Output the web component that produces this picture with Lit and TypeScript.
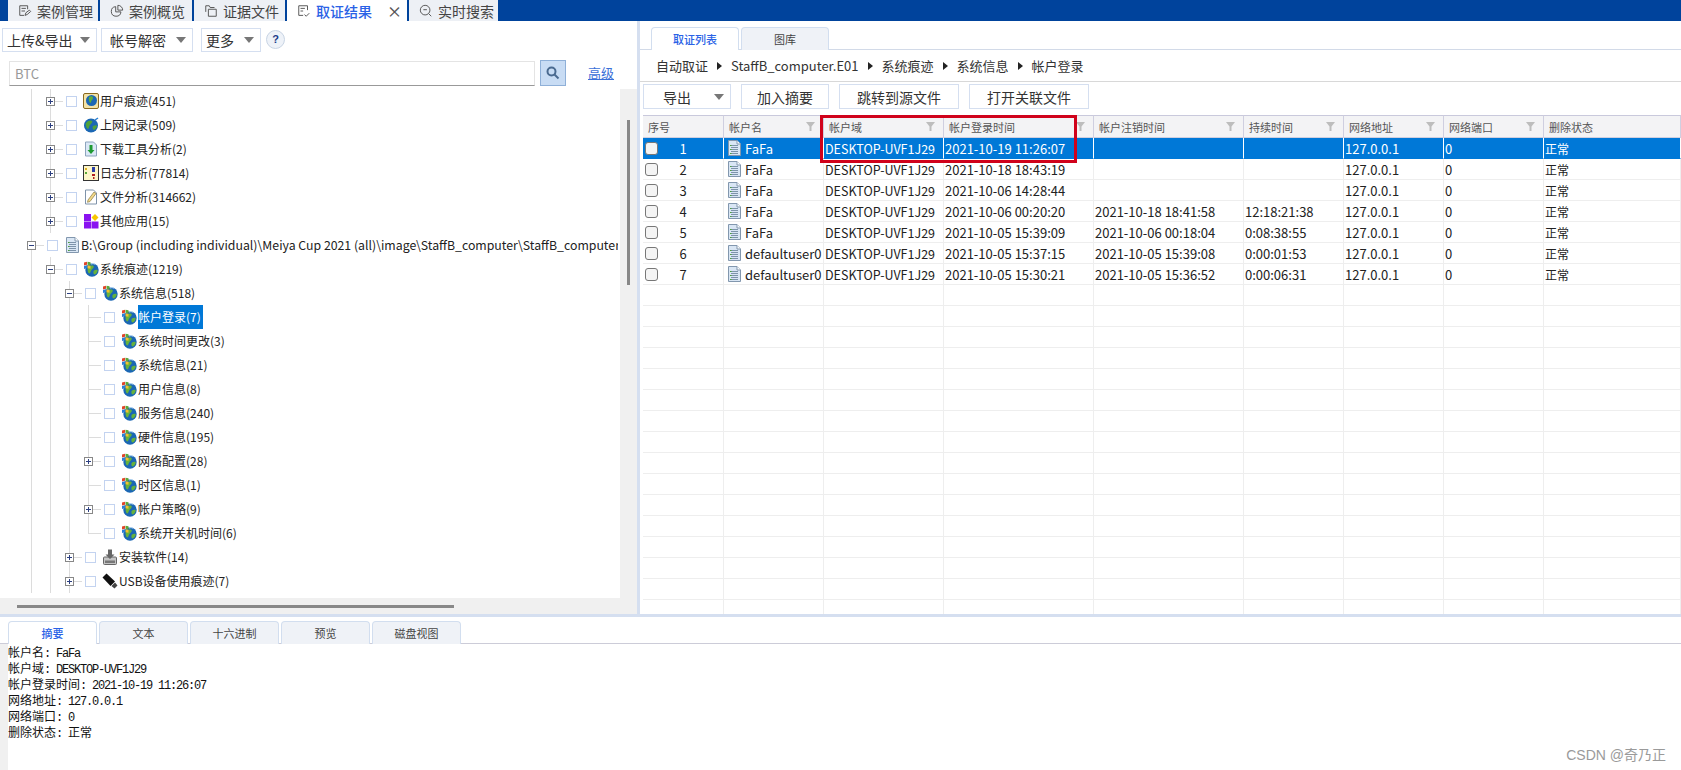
import { LitElement, html, css, svg } from 'lit';
import { customElement } from 'lit/decorators.js';

const globe = svg`<circle cx="9" cy="9" r="6.700" fill="#1b67b4"/><path d="M5 6.500c2-2 4.500-2.500 5.500-1.500s-1 3-2 4-1 3.500-2.200 3.500S4 8.500 5 6.500zM11 9.500c1.500-1 3.700-1 3.700 0s-1.700 4-3 4-1.800-3-.7-4z" fill="#66b23c"/><path d="M8 3c1.500-.5 3-.4 4 .3" stroke="#bfe0fa" fill="none"/>`;

const icons: Record<string, unknown> = {
  sys: html`<svg width="16" height="16" viewBox="0 0 16 16">${globe}<path d="M1 1.500l3-.8v3l-3 .8z" fill="#e0452a"/><path d="M4.500 .7l3 .5v3l-3-.5z" fill="#5aa838"/><path d="M1 5l3-.8v3L1 8z" fill="#2c7fd6"/><path d="M4.500 4.300l3 .5v3l-3-.5z" fill="#f2c12e"/></svg>`,
  user: html`<svg width="16" height="16" viewBox="0 0 16 16"><rect x=".5" y=".5" width="15" height="15" rx="1.500" fill="#f3e3a8" stroke="#8a6a20"/><circle cx="8.500" cy="7.500" r="5.500" fill="#1b67b4"/><path d="M6 4c2-1 4-1 4 1s-2 2-2 4-3 0-2-5z" fill="#5fae3a"/></svg>`,
  web: html`<svg width="16" height="16" viewBox="0 0 16 16"><circle cx="8" cy="8.500" r="7" fill="#1b67b4"/><path d="M3 6c2-3 5-3 6-2s-1 3-2 4-1 4-2 4-3-4-2-6zM10 9c2-1 4-1 4 0s-2 4-3 4-2-3-1-4z" fill="#4fa23a"/><path d="M12 3l3-2" stroke="#2a7fd0" stroke-width="1.500"/></svg>`,
  down: html`<svg width="16" height="16" viewBox="0 0 16 16"><path d="M2.500 1h8l3 3v11h-11z" fill="#dbe8f6" stroke="#8da4bd"/><path d="M6.500 4h3v5h2l-3.500 4-3.500-4h2z" fill="#1f9a32"/></svg>`,
  log: html`<svg width="16" height="16" viewBox="0 0 16 16"><rect x=".5" y=".5" width="15" height="15" fill="#fdf6c8" stroke="#333"/><rect x="2" y="3" width="2" height="2" fill="#e0b020"/><rect x="2" y="7" width="2" height="2" fill="#5aa838"/><rect x="9" y="2" width="3" height="5" fill="#2a3fa8"/><rect x="9" y="9" width="3" height="2" fill="#b02020"/><rect x="10" y="12" width="1.500" height="2" fill="#b02020"/></svg>`,
  file: html`<svg width="16" height="16" viewBox="0 0 16 16"><path d="M2.500 1h8l3 3v11h-11z" fill="#fff" stroke="#7f93aa"/><path d="M5 11l6-8 2 1.500-6 8-2.500 .8z" fill="#f3d98a" stroke="#8a7a40" stroke-width=".7"/></svg>`,
  apps: html`<svg width="16" height="16" viewBox="0 0 16 16"><rect x="1" y="1" width="7" height="7" fill="#8a12f0"/><rect x="1" y="8.500" width="7" height="7" fill="#8a12f0"/><rect x="8.500" y="8.500" width="7" height="7" fill="#8a12f0"/><path d="M12 1l3.500 3.500-3.500 3.500-3.500-3.500z" fill="#f7c600"/></svg>`,
  doc: html`<svg width="13" height="16" viewBox="0 0 13 16"><path d="M.5.500h8.500l3.500 3.500v11.500h-12z" fill="#d9e6f4" stroke="#8297ae"/><path d="M9 .5v3.500h3.500" fill="#fff" stroke="#8297ae"/><path d="M3 5.500h7M3 7.500h7M3 9.500h7M3 11.500h7M3 13.500h7" stroke="#7d93aa"/><path d="M2 5.500h1.500M2 9.500h1.500M2 13.500h1.500" stroke="#4fa23a"/></svg>`,
  setup: html`<svg width="14" height="16" viewBox="0 0 14 16"><rect x=".5" y="8" width="13" height="7.500" rx="1" fill="#c4c4c4" stroke="#666"/><rect x="2" y="11.500" width="10" height="2.500" fill="#777"/><path d="M5 .5h4v5h2.500L7 10 2.500 5.500H5z" fill="#666"/></svg>`,
  usb: html`<svg width="16" height="16" viewBox="0 0 16 16"><path d="M.5 4.500l4-4 8.500 8-4.500 4.500z" fill="#111"/><path d="M9.500 13l3.500-3.500 2.500 3-3 3z" fill="#444"/></svg>`,
};

const tabIcons: Record<string, unknown> = {
  edit: svg`<path d="M11 6V2H2v11h5M4 5h5M4 8h4M8 13l1-3 4-3 1.500 1.500-4 3.500z"/>`,
  pie: svg`<path d="M6.500 3a5.500 5.500 0 1 0 6 6h-6zM9 1.500V7h5.500A5.500 5.500 0 0 0 9 1.500z"/>`,
  folder: svg`<path d="M2 9V2h4l1 2h5M5 6v8h9V6z"/>`,
  check: svg`<path d="M12 7V2H2v11h5M4 5h5M4 8h3M8.500 12l2 2 3.500-3.500"/>`,
  search: svg`<circle cx="7" cy="7" r="5.500"/><path d="M11 11l3 3M5 6.500h4"/>`,
};

const tabs = [
  { t: '案例管理', i: 'edit', w: 90 },
  { t: '案例概览', i: 'pie', w: 92 },
  { t: '证据文件', i: 'folder', w: 91 },
  { t: '取证结果', i: 'check', w: 120, on: true },
  { t: '实时搜索', i: 'search', w: 89 },
];

// l: indent depth, tog: plus / minus / leaf, last: end of the sibling list
const tree = [
  { l: 1, tog: 'plus', i: 'user', t: '用户痕迹(451)' },
  { l: 1, tog: 'plus', i: 'web', t: '上网记录(509)' },
  { l: 1, tog: 'plus', i: 'down', t: '下载工具分析(2)' },
  { l: 1, tog: 'plus', i: 'log', t: '日志分析(77814)' },
  { l: 1, tog: 'plus', i: 'file', t: '文件分析(314662)' },
  { l: 1, tog: 'plus', i: 'apps', t: '其他应用(15)' },
  { l: 0, tog: 'minus', i: 'doc', t: 'B:\\Group (including individual)\\Meiya Cup 2021 (all)\\image\\StaffB_computer\\StaffB_computer', wide: true },
  { l: 1, tog: 'minus', i: 'sys', t: '系统痕迹(1219)' },
  { l: 2, tog: 'minus', i: 'sys', t: '系统信息(518)' },
  { l: 3, tog: 'leaf', i: 'sys', t: '帐户登录(7)', sel: true },
  { l: 3, tog: 'leaf', i: 'sys', t: '系统时间更改(3)' },
  { l: 3, tog: 'leaf', i: 'sys', t: '系统信息(21)' },
  { l: 3, tog: 'leaf', i: 'sys', t: '用户信息(8)' },
  { l: 3, tog: 'leaf', i: 'sys', t: '服务信息(240)' },
  { l: 3, tog: 'leaf', i: 'sys', t: '硬件信息(195)' },
  { l: 3, tog: 'plus', i: 'sys', t: '网络配置(28)' },
  { l: 3, tog: 'leaf', i: 'sys', t: '时区信息(1)' },
  { l: 3, tog: 'plus', i: 'sys', t: '帐户策略(9)' },
  { l: 3, tog: 'leaf', i: 'sys', t: '系统开关机时间(6)', last: true },
  { l: 2, tog: 'plus', i: 'setup', t: '安装软件(14)' },
  { l: 2, tog: 'plus', i: 'usb', t: 'USB设备使用痕迹(7)' },
];

const cols = ['序号', '帐户名', '帐户域', '帐户登录时间', '帐户注销时间', '持续时间', '网络地址', '网络端口', '删除状态'];

const rows = [
  ['FaFa', '2021-10-19 11:26:07', '', ''],
  ['FaFa', '2021-10-18 18:43:19', '', ''],
  ['FaFa', '2021-10-06 14:28:44', '', ''],
  ['FaFa', '2021-10-06 00:20:20', '2021-10-18 18:41:58', '12:18:21:38'],
  ['FaFa', '2021-10-05 15:39:09', '2021-10-06 00:18:04', '0:08:38:55'],
  ['defaultuser0', '2021-10-05 15:37:15', '2021-10-05 15:39:08', '0:00:01:53'],
  ['defaultuser0', '2021-10-05 15:30:21', '2021-10-05 15:36:52', '0:00:06:31'],
];

const summary = [
  ['帐户名', 'FaFa'],
  ['帐户域', 'DESKTOP-UVF1J29'],
  ['帐户登录时间', '2021-10-19 11:26:07'],
  ['网络地址', '127.0.0.1'],
  ['网络端口', '0'],
  ['删除状态', '正常'],
];

@customElement('app-root')
export class AppRoot extends LitElement {

  static styles = css`
    :host {
      display: flex;
      flex-direction: column;
      width: 1681px;
      height: 770px;
      overflow: hidden;
      background: #fff;
      position: relative;
      font-family: "Noto Sans CJK SC", sans-serif;
      font-size: 13px;
      color: #222;
    }
    .topbar {
      height: 21px;
      flex: none;
      background: #00439c;
      display: flex;
      gap: 2px;
      padding-left: 8px;
      overflow: hidden;
    }
    .toptab {
      display: flex;
      align-items: center;
      flex: none;
      box-sizing: border-box;
      padding-left: 10px;
      gap: 5px;
      background: #edf0f5;
      color: #444;
      font-size: 14px;
      line-height: 20px;
    }
    .toptab.on { background: #fff; color: #2a62e6; font-weight: 500; }
    .toptab svg { flex: none; fill: none; stroke: #555; stroke-width: 1.1; }
    .toptab .x { margin-left: 10px; color: #555; font-size: 15px; }
    .main { height: 593px; flex: none; display: flex; }
    .left { width: 637px; flex: none; display: flex; flex-direction: column; }
    .vsplit { width: 3px; flex: none; background: #d5dff0; }
    .right { flex: 1; min-width: 0; display: flex; flex-direction: column; overflow: hidden; }
    .hsplit { height: 3px; flex: none; background: #d5dff0; }

    .ltools { height: 40px; flex: none; padding: 7px 0 0 2px; box-sizing: border-box; display: flex; align-items: flex-start; }
    .ddl {
      height: 24px;
      box-sizing: border-box;
      border: 1px solid #d5dff0;
      display: flex;
      align-items: center;
      justify-content: space-between;
      padding: 0 6px 0 4px;
      font-size: 14px;
      color: #333;
    }
    .caret { width: 0; height: 0; border: 5px solid transparent; border-top: 6px solid #777; border-bottom: 0; }
    .help {
      width: 19px;
      height: 19px;
      box-sizing: border-box;
      border: 1px solid #c8d4e4;
      border-radius: 50%;
      background: #eef2f8;
      color: #1a3a8a;
      font: bold 11px/17px "Liberation Sans", sans-serif;
      text-align: center;
      margin: 2px 0 0 5px;
    }
    .search { height: 28px; flex: none; display: flex; padding-left: 9px; align-items: flex-start; }
    .input {
      width: 526px;
      height: 25px;
      box-sizing: border-box;
      border: 1px solid #e4e4e4;
      border-bottom: 1px solid #999;
      color: #999;
      padding-left: 5px;
      line-height: 23px;
      font-size: 13px;
    }
    .sbtn {
      width: 26px;
      height: 26px;
      margin: -1px 0 0 5px;
      box-sizing: border-box;
      border: 1px solid #8fb0d8;
      background: #c8dcf4;
      display: flex;
      align-items: center;
      justify-content: center;
    }
    .adv { margin: 3px 0 0 22px; color: #3b70d8; text-decoration: underline; font-size: 13px; line-height: 18px; }

    .treewrap { flex: 1; min-height: 0; display: flex; }
    .treecol { width: 620px; flex: none; display: flex; flex-direction: column; }
    .tree { flex: 1; min-height: 0; overflow: hidden; }
    .hbar { height: 16px; flex: none; background: #f0f0f0; padding: 7px 0 0 17px; box-sizing: border-box; }
    .hthumb { width: 437px; height: 3px; background: #888; }
    .vbar { width: 17px; flex: none; background: #f0f0f0; padding: 31px 0 0 7px; box-sizing: border-box; }
    .vthumb { width: 3px; height: 165px; background: #888; }

    .row { height: 24px; display: flex; align-items: stretch; padding-left: 22px; white-space: nowrap; }
    .guide, .tog { width: 19px; flex: none; position: relative; }
    .guide::before, .tog::before {
      content: "";
      position: absolute;
      left: 9px;
      top: 0;
      bottom: 0;
      width: 1px;
      background: #dcdcdc;
    }
    .tog.last::before { bottom: 12px; }
    .tog::after {
      content: "";
      position: absolute;
      left: 9px;
      right: -3px;
      top: 12px;
      height: 1px;
      background: #dcdcdc;
    }
    .box {
      position: absolute;
      left: 5px;
      top: 8px;
      width: 9px;
      height: 9px;
      box-sizing: border-box;
      border: 1px solid #888;
      background: #fff;
      z-index: 1;
    }
    .box::before { content: ""; position: absolute; left: 1px; right: 1px; top: 3px; height: 1px; background: #2c3f80; }
    .box.plus::after { content: ""; position: absolute; top: 1px; bottom: 1px; left: 3px; width: 1px; background: #2c3f80; }
    .chk {
      width: 9px;
      height: 9px;
      flex: none;
      align-self: center;
      border: 1px solid #c3d3f0;
      margin: 0 6px 0 6px;
    }
    .ico { width: 16px; height: 16px; flex: none; align-self: center; display: flex; justify-content: center; margin-right: 1px; }
    .lbl { line-height: 24px; font-size: 12px; color: #222; padding-right: 2px; }
    .lbl.wide { font-size: 12.300px; width: 537px; flex: none; padding: 0; overflow: hidden; }
    .lbl.sel { background: #0078d7; color: #fff; }

    .rtabs { height: 29px; flex: none; box-sizing: border-box; padding: 6px 0 0 11px; display: flex; gap: 2px; border-bottom: 1px solid #d2dae8; }
    .rtab, .btab {
      box-sizing: border-box;
      border: 1px solid #d2deef;
      border-bottom: 0;
      border-radius: 4px 4px 0 0;
      background: #eff2f7;
      text-align: center;
      color: #444;
      font-size: 11px;
    }
    .rtab { width: 88px; height: 23px; line-height: 23px; }
    .rtab.on, .btab.on { background: #fff; color: #2a62e6; font-weight: 500; }
    .crumb { height: 32px; flex: none; box-sizing: border-box; border-bottom: 1px solid #d8d8d8; display: flex; align-items: center; padding-left: 16px; gap: 9px; color: #333; }
    .tri { width: 0; height: 0; border: 4px solid transparent; border-left: 5px solid #222; border-right: 0; }
    .rtools { height: 33px; flex: none; padding: 2px 0 0 3px; display: flex; gap: 10px; box-sizing: border-box; }
    .rbtn {
      height: 25px;
      box-sizing: border-box;
      border: 1px solid #d5dff0;
      display: flex;
      align-items: center;
      justify-content: center;
      color: #333;
      font-size: 14px;
    }
    .rbtn.drop { width: 88px; justify-content: space-between; padding: 0 6px 0 19px; }
    .table { position: relative; margin-left: 3px; flex: 1; min-height: 0; overflow: hidden; }
    .tr { display: grid; grid-template-columns: 81px 100px 120px 150px 150px 100px 100px 100px 1fr; }
    .th {
      height: 23px;
      box-sizing: border-box;
      background: #f3f3f5;
      border-top: 1px solid #c9c9dc;
      border-right: 1px solid #cfcfe0;
      border-bottom: 1px solid #cfcfe0;
      display: flex;
      align-items: center;
      justify-content: space-between;
      padding: 0 8px 0 5px;
      font-size: 11px;
      color: #555;
    }
    .td {
      height: 21px;
      box-sizing: border-box;
      border-right: 1px solid #eee;
      border-bottom: 1px solid #eee;
      line-height: 20px;
      padding: 1px 0 0 1px;
      white-space: nowrap;
      overflow: hidden;
      color: #222;
      font-size: 13px;
      display: flex;
      align-items: center;
    }
    .td .cn { font-size: 12px; }
    .td .host { font-size: 12.500px; }
    .tr.sel .td { background: #0078d7; color: #fff; border-right-color: #fff; border-bottom-color: #0078d7; }
    .tick { width: 13px; height: 13px; box-sizing: border-box; border: 1px solid #777; border-radius: 3px; background: #f4f4f4; flex: none; margin: -1px 19px 0 1px; }
    .num { width: 12px; text-align: center; }
    .td .fi { margin: -1px 4px 0 3px; display: flex; }
    .redbox {
      position: absolute;
      left: 177px;
      top: 0;
      width: 257px;
      height: 48px;
      box-sizing: border-box;
      border: 3px solid #d0021b;
      pointer-events: none;
    }

    .bottom { flex: 1; min-height: 0; display: flex; flex-direction: column; }
    .btabs { height: 27px; flex: none; box-sizing: border-box; padding: 4px 0 0 8px; display: flex; gap: 2px; border-bottom: 1px solid #ccccd8; }
    .btab { width: 89px; height: 23px; line-height: 23px; }
    .summary { flex: 1; border-left: 8px solid #f0f0f0; }
    .sline { height: 16px; line-height: 16px; font-size: 12px; color: #111; white-space: pre; }
    .mono { font-family: "Liberation Mono", monospace; font-size: 12px; letter-spacing: -1.200px; }
    .mark { position: absolute; right: 15px; bottom: 6px; font: 14px "Liberation Sans", "Noto Sans CJK SC", sans-serif; color: #9a9a9a; }
  `;

  renderTreeRow(r: any) {
    return html`
      <div class="row">
        ${Array.from({ length: r.l }, () => html`<div class="guide"></div>`)}
        <div class="tog ${r.last ? 'last' : ''}">
          ${r.tog === 'leaf' ? '' : html`<div class="box ${r.tog}"></div>`}
        </div>
        <div class="chk"></div>
        <div class="ico">${icons[r.i]}</div>
        <div class="lbl ${r.sel ? 'sel' : ''} ${r.wide ? 'wide' : ''}">${r.t}</div>
      </div>`;
  }

  renderRow(r: string[], i: number) {
    return html`
      <div class="tr ${i === 0 ? 'sel' : ''}">
        <div class="td"><span class="tick"></span><span class="num">${i + 1}</span></div>
        <div class="td"><span class="fi">${icons.doc}</span>${r[0]}</div>
        <div class="td"><span class="host">DESKTOP-UVF1J29</span></div>
        <div class="td">${r[1]}</div>
        <div class="td">${r[2]}</div>
        <div class="td">${r[3]}</div>
        <div class="td">127.0.0.1</div>
        <div class="td">0</div>
        <div class="td"><span class="cn">正常</span></div>
      </div>`;
  }

  render() {
    const blanks = Array.from({ length: 16 });
    const blankCells = Array.from({ length: 9 });
    return html`
      <div class="topbar">
        ${tabs.map((t) => html`
          <div class="toptab ${t.on ? 'on' : ''}" style="width:${t.w}px">
            <svg width="14" height="14" viewBox="0 0 16 16">${tabIcons[t.i]}</svg>
            <span>${t.t}</span>
            ${t.on ? html`<span class="x">×</span>` : ''}
          </div>`)}
      </div>
      <div class="main">
        <div class="left">
          <div class="ltools">
            <div class="ddl" style="width:95px">上传&导出<span class="caret"></span></div>
            <div class="ddl" style="width:92px;margin-left:4px;padding-left:8px">帐号解密<span class="caret"></span></div>
            <div class="ddl" style="width:60px;margin-left:8px">更多<span class="caret"></span></div>
            <div class="help">?</div>
          </div>
          <div class="search">
            <div class="input">BTC</div>
            <div class="sbtn">
              <svg width="14" height="14" viewBox="0 0 14 14" fill="none" stroke="#4a6a90" stroke-width="2"><circle cx="5.500" cy="5.500" r="4"/><path d="M8.500 8.500l4 4"/></svg>
            </div>
            <div class="adv">高级</div>
          </div>
          <div class="treewrap">
            <div class="treecol">
              <div class="tree">${tree.map((r) => this.renderTreeRow(r))}</div>
              <div class="hbar"><div class="hthumb"></div></div>
            </div>
            <div class="vbar"><div class="vthumb"></div></div>
          </div>
        </div>
        <div class="vsplit"></div>
        <div class="right">
          <div class="rtabs">
            <div class="rtab on">取证列表</div>
            <div class="rtab">图库</div>
          </div>
          <div class="crumb">
            <span>自动取证</span><i class="tri"></i>
            <span>StaffB_computer.E01</span><i class="tri"></i>
            <span>系统痕迹</span><i class="tri"></i>
            <span>系统信息</span><i class="tri"></i>
            <span>帐户登录</span>
          </div>
          <div class="rtools">
            <div class="rbtn drop">导出<span class="caret"></span></div>
            <div class="rbtn" style="width:88px">加入摘要</div>
            <div class="rbtn" style="width:120px">跳转到源文件</div>
            <div class="rbtn" style="width:120px">打开关联文件</div>
          </div>
          <div class="table">
            <div class="tr">
              ${cols.map((c, i) => html`
                <div class="th">
                  <span>${c}</span>
                  ${i === 0 || i === 8 ? '' : html`<svg width="9" height="9" viewBox="0 0 9 9"><path d="M0 0h9L5.500 4.500V9h-2V4.500z" fill="#bdbdbd"/></svg>`}
                </div>`)}
            </div>
            ${rows.map((r, i) => this.renderRow(r, i))}
            ${blanks.map(() => html`<div class="tr">${blankCells.map(() => html`<div class="td"></div>`)}</div>`)}
            <div class="redbox"></div>
          </div>
        </div>
      </div>
      <div class="hsplit"></div>
      <div class="bottom">
        <div class="btabs">
          <div class="btab on">摘要</div>
          <div class="btab">文本</div>
          <div class="btab">十六进制</div>
          <div class="btab">预览</div>
          <div class="btab">磁盘视图</div>
        </div>
        <div class="summary">
          ${summary.map(([k, v]) => {
            const ascii = /^[\x00-\x7f]+$/.test(v);
            return html`<div class="sline">${k}<span class="mono">: ${ascii ? v : ''}</span>${ascii ? '' : v}</div>`;
          })}
        </div>
      </div>
      <div class="mark">CSDN @奇乃正</div>
    `;
  }
}
